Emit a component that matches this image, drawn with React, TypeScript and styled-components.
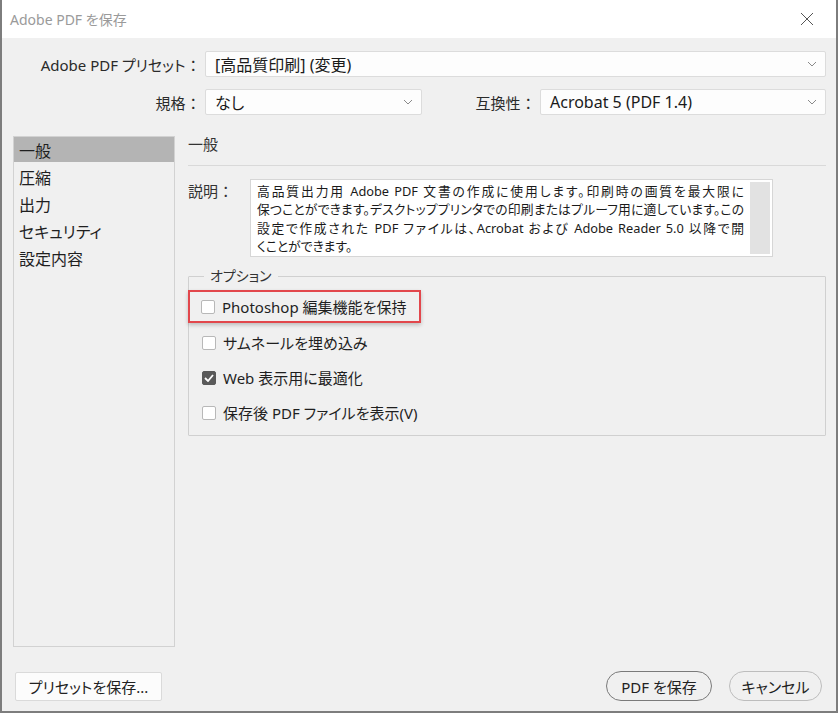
import React from 'react';
import styled, { createGlobalStyle, css } from 'styled-components';

const GlobalStyle = createGlobalStyle`
  html, body {
    margin: 0;
    padding: 0;
    background: #ffffff;
  }
  body {
    font-family: "Noto Sans", "Noto Sans CJK JP", sans-serif;
    font-feature-settings: "palt";
    color: #1f1f1f;
  }
`;

const Window = styled.div`
  width: 838px;
  height: 713px;
  box-sizing: border-box;
  border-left: 2px solid #7d7d7d;
  border-right: 2px solid #7d7d7d;
  border-bottom: 2px solid #7d7d7d;
  background: #f0f0f0;
  display: flex;
  flex-direction: column;
`;

const TitleBar = styled.div`
  height: 38px;
  background: #ffffff;
  display: flex;
  align-items: center;
  justify-content: space-between;
  padding: 0 22px 0 8px;
  flex-shrink: 0;
`;

const Title = styled.span`
  font-size: 14px;
  color: #9a9a9a;
`;

const Body = styled.div`
  flex: 1;
  display: flex;
  flex-direction: column;
  padding: 13px 10px 0 0;
`;

const FieldRow = styled.div<{ $top?: number }>`
  display: flex;
  align-items: center;
  gap: 8px;
  margin-top: ${(p) => p.$top ?? 0}px;
`;

const Label = styled.span<{ $width: number }>`
  width: ${(p) => p.$width}px;
  flex-shrink: 0;
  text-align: right;
  font-size: 15px;
  color: #2a2a2a;
  white-space: nowrap;
`;

const SelectBox = styled.div<{ $width?: number }>`
  height: 26px;
  box-sizing: border-box;
  ${(p) =>
    p.$width
      ? css`
          width: ${p.$width}px;
        `
      : css`
          flex: 1;
        `}
  background: #fdfdfd;
  border: 1px solid #dcdcdc;
  border-radius: 2px;
  display: flex;
  align-items: center;
  justify-content: space-between;
  padding: 0 8px 0 9px;
  font-size: 16px;
  color: #1a1a1a;
  white-space: nowrap;
`;

const Main = styled.div`
  display: flex;
  margin-top: 21px;
  height: 511px;
`;

const SideList = styled.ul`
  list-style: none;
  margin: 0 0 0 11px;
  padding: 0;
  width: 162px;
  box-sizing: border-box;
  border: 1px solid #d2d2d2;
`;

const SideItem = styled.li<{ $active?: boolean }>`
  height: 27px;
  display: flex;
  align-items: center;
  padding-left: 5px;
  font-size: 16px;
  color: #1f1f1f;
  background: ${(p) => (p.$active ? '#b4b4b4' : 'transparent')};
  &:first-child {
    height: 25px;
    margin-bottom: 1px;
  }
`;

const Content = styled.div`
  flex: 1;
  margin-left: 13px;
  display: flex;
  flex-direction: column;
`;

const Heading = styled.div`
  height: 29px;
  border-bottom: 1px solid #d9d9d9;
  font-size: 15px;
  color: #333;
  line-height: 16px;
`;

const DescRow = styled.div`
  display: flex;
  margin-top: 13px;
`;

const DescLabel = styled.span`
  width: 62px;
  font-size: 15px;
  color: #333;
  padding-top: 1px;
`;

const DescBox = styled.div`
  width: 523px;
  height: 78px;
  box-sizing: border-box;
  background: #ffffff;
  border: 1px solid #d6d6d6;
  display: flex;
  padding: 2px 2px 2px 6px;
`;

const DescText = styled.div`
  flex: 1;
  min-width: 0;
  overflow: hidden;
  padding-right: 2px;
  font-size: 12.8px;
  line-height: 18.3px;
  color: #1a1a1a;
`;

const DescLine = styled.div<{ $justify?: boolean }>`
  white-space: nowrap;
  ${(p) =>
    p.$justify &&
    css`
      white-space: normal;
      text-align: justify;
      text-align-last: justify;
    `}
`;

const ScrollTrack = styled.div`
  width: 20px;
  flex-shrink: 0;
  background: #e2e2e2;
  margin-left: 4px;
`;

const Group = styled.fieldset`
  margin: 9px 0 0 0;
  padding: 4px 0 5px 0;
  border: 1px solid #d0d0d0;
  border-radius: 1px;
`;

const Legend = styled.legend`
  margin-left: 15px;
  padding: 0 6px;
  font-size: 14px;
  line-height: 20px;
  color: #333;
`;

const OptionRow = styled.div<{ $highlight?: boolean }>`
  display: flex;
  align-items: center;
  gap: 7px;
  height: 35px;
  padding-left: 13px;
  font-size: 15px;
  color: #1f1f1f;
  box-sizing: border-box;
  ${(p) =>
    p.$highlight &&
    css`
      width: fit-content;
      height: 33px;
      margin: 0 0 2px -1px;
      padding: 0 13px 0 11px;
      border: 2.5px solid #e2474c;
      box-shadow: 0 2px 4px rgba(0, 0, 0, 0.22);
    `}
`;

const Check = styled.span<{ $checked?: boolean }>`
  width: 14px;
  height: 14px;
  box-sizing: border-box;
  border-radius: 2px;
  border: 1px solid ${(p) => (p.$checked ? '#5a5a5a' : '#b8b8b8')};
  background: ${(p) => (p.$checked ? '#5a5a5a' : '#ffffff')};
  display: flex;
  align-items: center;
  justify-content: center;
  flex-shrink: 0;
`;

const Footer = styled.div`
  display: flex;
  align-items: center;
  margin-top: 24px;
  padding: 0 4px 0 13px;
`;

const PlainButton = styled.button`
  height: 29px;
  width: 147px;
  background: #fcfcfc;
  border: 1px solid #dadada;
  border-radius: 2px;
  font-family: inherit;
  font-feature-settings: "palt";
  font-size: 15px;
  color: #222;
  padding: 0;
`;

const PillButton = styled.button<{ $primary?: boolean; $width: number }>`
  height: 30px;
  width: ${(p) => p.$width}px;
  border-radius: 15px;
  background: #f0f0f0;
  border: 1px solid ${(p) => (p.$primary ? '#7a7a7a' : '#bdbdbd')};
  font-family: inherit;
  font-feature-settings: "palt";
  font-size: 15px;
  color: #222;
  padding: 0;
  & + & {
    margin-left: 17px;
  }
`;

const Spacer = styled.div`
  flex: 1;
`;

const Chevron = () => (
  <svg width="10" height="6" viewBox="0 0 10 6">
    <path d="M1 1l4 4 4-4" fill="none" stroke="#8a8a8a" strokeWidth="1" />
  </svg>
);

const CloseIcon = () => (
  <svg width="14" height="14" viewBox="0 0 14 14">
    <path d="M1 1l12 12M13 1L1 13" stroke="#555" strokeWidth="1" />
  </svg>
);

const Tick = () => (
  <svg width="10" height="8" viewBox="0 0 10 8">
    <path d="M1 4l3 3 5-6" fill="none" stroke="#fff" strokeWidth="1.8" />
  </svg>
);

const options = [
  { label: 'Photoshop 編集機能を保持', checked: false, highlight: true },
  { label: 'サムネールを埋め込み', checked: false },
  { label: 'Web 表示用に最適化', checked: true },
  { label: '保存後 PDF ファイルを表示(V)', checked: false },
];

const sections = ['一般', '圧縮', '出力', 'セキュリティ', '設定内容'];

const description = [
  '高品質出力用 Adobe PDF 文書の作成に使用します。印刷時の画質を最大限に',
  '保つことができます。デスクトッププリンタでの印刷またはプルーフ用に適しています。この',
  '設定で作成された PDF ファイルは、Acrobat および Adobe Reader 5.0 以降で開',
  'くことができます。',
];

const App = () => {
  return (
    <>
      <GlobalStyle />
      <Window>
        <TitleBar>
          <Title>Adobe PDF を保存</Title>
          <CloseIcon />
        </TitleBar>
        <Body>
          <FieldRow $top={0}>
            <Label $width={195}>Adobe PDF プリセット ：</Label>
            <SelectBox>
              <span>[高品質印刷] (変更)</span>
              <Chevron />
            </SelectBox>
          </FieldRow>
          <FieldRow $top={12}>
            <Label $width={195}>規格 ：</Label>
            <SelectBox $width={217}>
              <span>なし</span>
              <Chevron />
            </SelectBox>
            <Label $width={102}>互換性 ：</Label>
            <SelectBox>
              <span>Acrobat 5 (PDF 1.4)</span>
              <Chevron />
            </SelectBox>
          </FieldRow>
          <Main>
            <SideList>
              {sections.map((s, i) => (
                <SideItem key={s} $active={i === 0}>
                  {s}
                </SideItem>
              ))}
            </SideList>
            <Content>
              <Heading>一般</Heading>
              <DescRow>
                <DescLabel>説明 ：</DescLabel>
                <DescBox>
                  <DescText>
                    {description.map((line, i) => (
                      <DescLine key={i} $justify={i < description.length - 1}>
                        {line}
                      </DescLine>
                    ))}
                  </DescText>
                  <ScrollTrack />
                </DescBox>
              </DescRow>
              <Group>
                <Legend>オプション</Legend>
                {options.map((o) => (
                  <OptionRow key={o.label} $highlight={o.highlight}>
                    <Check $checked={o.checked}>{o.checked && <Tick />}</Check>
                    <span>{o.label}</span>
                  </OptionRow>
                ))}
              </Group>
            </Content>
          </Main>
          <Footer>
            <PlainButton>プリセットを保存...</PlainButton>
            <Spacer />
            <PillButton $primary $width={106}>
              PDF を保存
            </PillButton>
            <PillButton $width={93}>キャンセル</PillButton>
          </Footer>
        </Body>
      </Window>
    </>
  );
};

export default App;
